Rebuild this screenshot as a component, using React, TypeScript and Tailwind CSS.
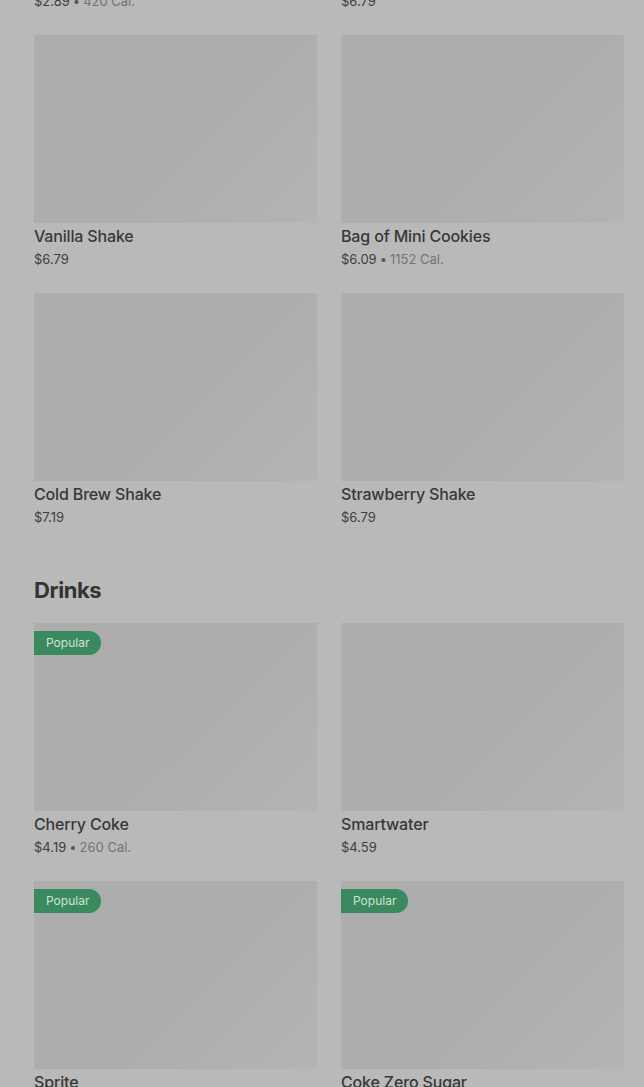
type Item = { name: string; price: string; cal?: string; popular?: boolean };

const prevRow: Item[] = [
  { name: "Chocolate Chip Cookie", price: "$2.89", cal: "420 Cal." },
  { name: "Chocolate Shake", price: "$6.79" },
];

const shakes: Item[] = [
  { name: "Vanilla Shake", price: "$6.79" },
  { name: "Bag of Mini Cookies", price: "$6.09", cal: "1152 Cal." },
  { name: "Cold Brew Shake", price: "$7.19" },
  { name: "Strawberry Shake", price: "$6.79" },
];

const drinks: Item[] = [
  { name: "Cherry Coke", price: "$4.19", cal: "260 Cal.", popular: true },
  { name: "Smartwater", price: "$4.59" },
  { name: "Sprite", price: "$4.19", popular: true },
  { name: "Coke Zero Sugar", price: "$4.19", popular: true },
];

function Card({ item }: { item: Item }) {
  return (
    <div>
      <div className="relative h-[188px] bg-[linear-gradient(135deg,#adadad_55%,#b4b4b4)]">
        {item.popular && (
          <span className="absolute left-0 top-2 flex h-6 items-center rounded-r-full bg-[#3b8a5f] px-3 text-[12px] text-[#cde4d7]">
            Popular
          </span>
        )}
      </div>
      <div className="mt-[3px] text-[16px] leading-5 font-medium tracking-[-0.01em] text-[#383838]">
        {item.name}
      </div>
      <div className="mt-1 text-[13px] leading-[18px] text-[#3e3e3e]">
        {item.price}
        {item.cal && (
          <>
            <span className="mx-[3px] text-[#5a5a5a]">•</span>
            <span className="text-[#747474]">{item.cal}</span>
          </>
        )}
      </div>
    </div>
  );
}

function Grid({ items }: { items: Item[] }) {
  return (
    <div className="grid grid-cols-2 gap-x-6 gap-y-[25px]">
      {items.map((it) => (
        <Card key={it.name} item={it} />
      ))}
    </div>
  );
}

export default function App() {
  return (
    <div
      className="h-[1087px] overflow-hidden bg-[#b9b9b9] pl-[34px] pr-5"
      style={{ fontFamily: "Inter, 'Noto Sans', sans-serif" }}
    >
      <div className="-mt-[223px]">
        <Grid items={prevRow} />
      </div>
      <div className="mt-[25px]">
        <Grid items={shakes} />
      </div>
      <h2 className="mt-[50px] mb-[19px] text-[22px] leading-7 font-bold tracking-[-0.02em] text-[#333]">
        Drinks
      </h2>
      <Grid items={drinks} />
    </div>
  );
}
